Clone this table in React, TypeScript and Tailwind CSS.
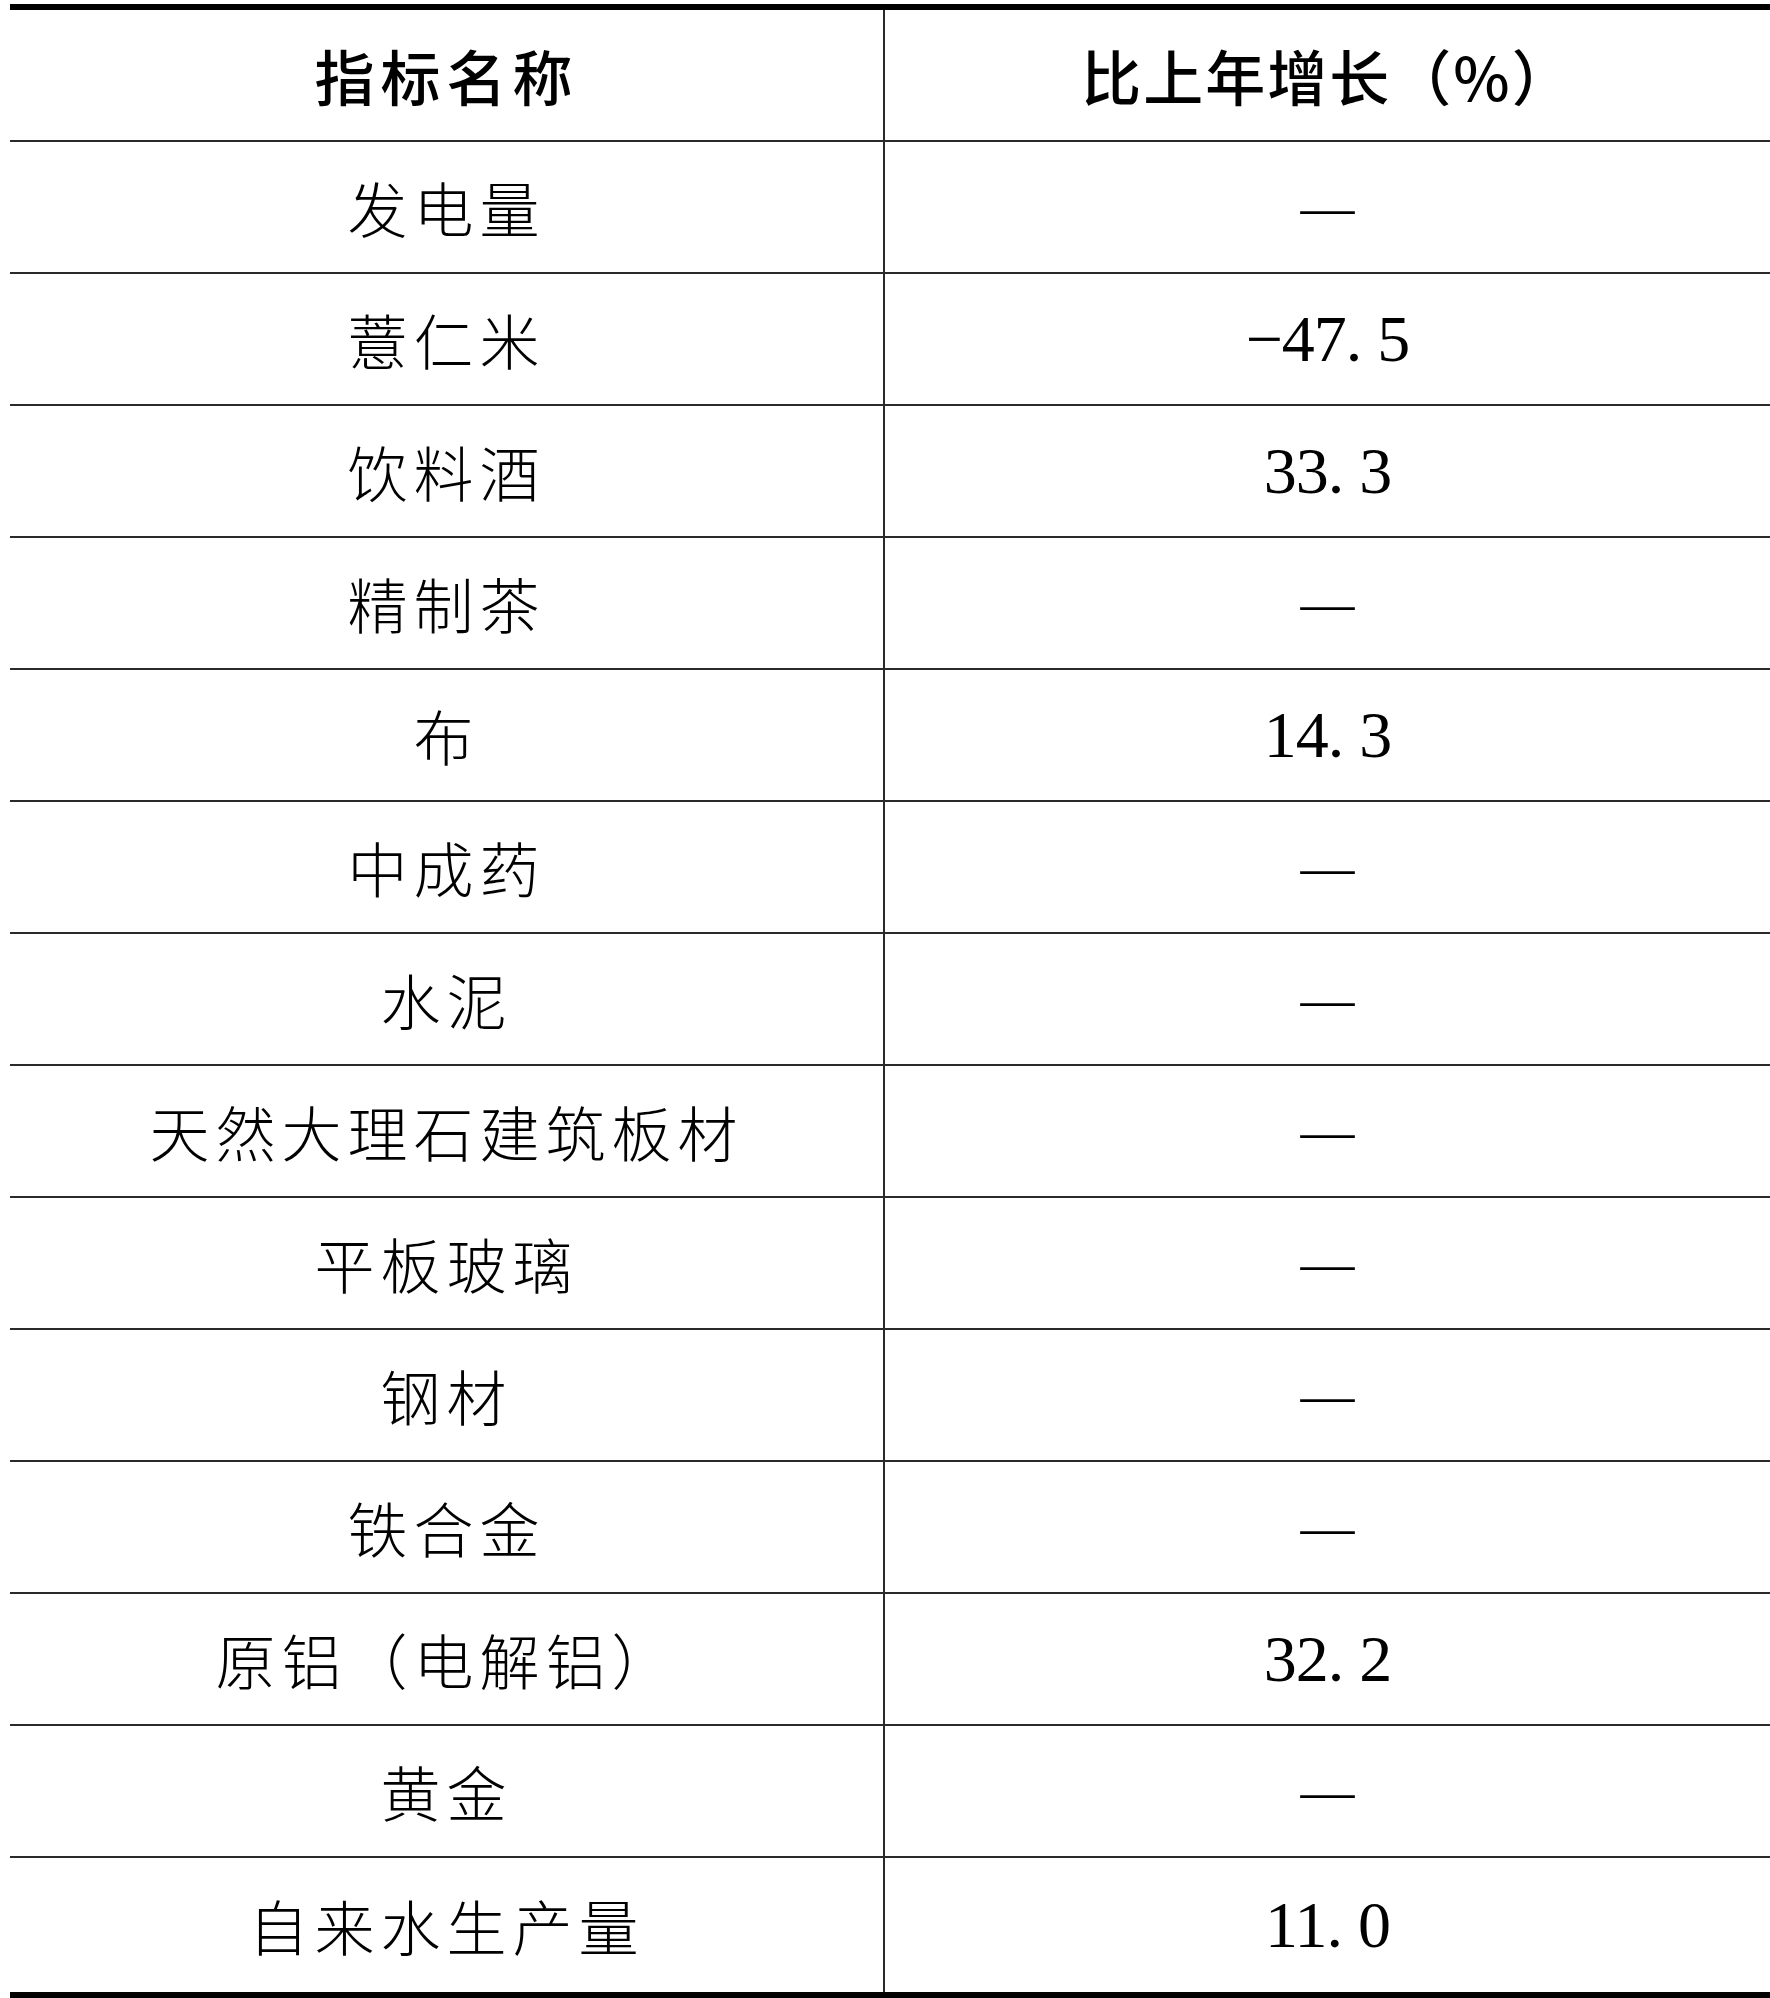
import React from "react";

const rows: [string, string][] = [
  ["发电量", "—"],
  ["薏仁米", "−47.5"],
  ["饮料酒", "33.3"],
  ["精制茶", "—"],
  ["布", "14.3"],
  ["中成药", "—"],
  ["水泥", "—"],
  ["天然大理石建筑板材", "—"],
  ["平板玻璃", "—"],
  ["钢材", "—"],
  ["铁合金", "—"],
  ["原铝（电解铝）", "32.2"],
  ["黄金", "—"],
  ["自来水生产量", "11.0"],
];

function Value({ v }: { v: string }) {
  if (v === "—") {
    return (
      <span className="text-[54px] leading-none text-black [font-family:'Liberation_Serif',serif]">
        —
      </span>
    );
  }
  const [a, b] = v.split(".");
  return (
    <span className="text-[66px] leading-none text-black tracking-[-1px] [font-family:'Liberation_Serif',serif]">
      {a}
      <span className="mr-[16px]">.</span>
      {b}
    </span>
  );
}

export default function App() {
  return (
    <div className="w-[1770px] h-[1998px] overflow-hidden bg-white pt-[4px] pl-[10px]">
      <div className="border-t-[6px] border-b-[6px] border-black">
        <div className="grid grid-cols-[875px_1fr] h-[132px] border-b-2 border-[#2a2a2a]">
          <div className="flex items-center justify-center border-r-2 border-[#2a2a2a]">
            <span className="text-[60px] font-medium tracking-[6px] text-black leading-none [font-family:'Noto_Sans_CJK_SC',sans-serif]">
              指标名称
            </span>
          </div>
          <div className="flex items-center justify-center">
            <span className="text-[60px] font-medium tracking-[2px] text-black leading-none [font-family:'Noto_Sans_CJK_SC',sans-serif]">
              比上年增长（%）
            </span>
          </div>
        </div>
        {rows.map(([name, v], i) => {
          const last = i === rows.length - 1;
          return (
            <div
              key={name}
              className={
                last
                  ? "grid grid-cols-[875px_1fr] h-[134px]"
                  : "grid grid-cols-[875px_1fr] h-[132px] border-b-2 border-[#2a2a2a]"
              }
            >
              <div className="flex items-center justify-center border-r-2 border-[#2a2a2a]">
                <span className="text-[60px] font-light tracking-[6px] text-black leading-none [font-family:'Noto_Sans_CJK_SC',sans-serif]">
                  {name}
                </span>
              </div>
              <div className="flex items-center justify-center">
                <Value v={v} />
              </div>
            </div>
          );
        })}
      </div>
    </div>
  );
}
